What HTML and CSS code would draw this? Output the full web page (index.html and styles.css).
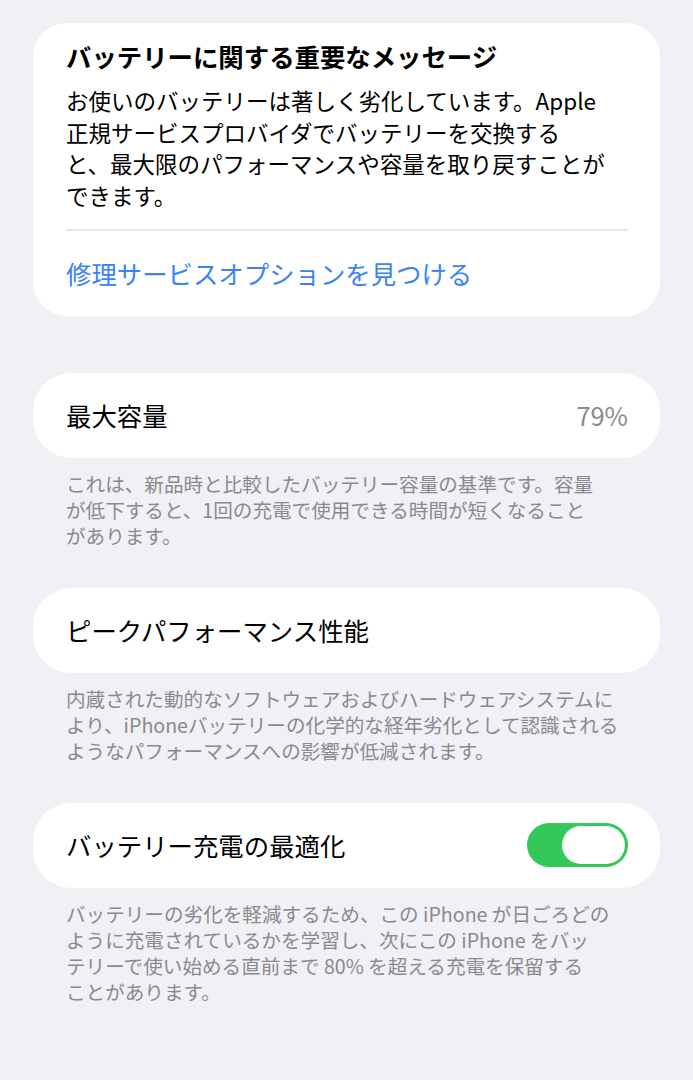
FILE: index.html
```html
<!DOCTYPE html>
<html lang="ja">
<head>
  <meta charset="UTF-8">
  <meta name="viewport" content="width=device-width, initial-scale=1.0">
  <title>バッテリーの状態と充電</title>
  <link rel="stylesheet" href="styles.css">
</head>
<body>
  <main class="page">
    <section class="card message">
      <h2 class="message-title">バッテリーに関する重要なメッセージ</h2>
      <p class="message-body">お使いのバッテリーは著しく劣化しています。Apple<br>正規サービスプロバイダでバッテリーを交換する<br>と、最大限のパフォーマンスや容量を取り戻すことが<br>できます。</p>
      <div class="divider"></div>
      <a class="message-link" href="#">修理サービスオプションを見つける</a>
    </section>

    <section class="card row first">
      <span class="row-label">最大容量</span>
      <span class="row-value">79%</span>
    </section>
    <p class="caption">これは、新品時と比較したバッテリー容量の基準です。容量<br>が低下すると、1回の充電で使用できる時間が短くなること<br>があります。</p>

    <section class="card row">
      <span class="row-label">ピークパフォーマンス性能</span>
    </section>
    <p class="caption">内蔵された動的なソフトウェアおよびハードウェアシステムに<br>より、iPhoneバッテリーの化学的な経年劣化として認識される<br>ようなパフォーマンスへの影響が低減されます。</p>

    <section class="card row">
      <span class="row-label">バッテリー充電の最適化</span>
      <span class="toggle on"><span class="knob"></span></span>
    </section>
    <p class="caption">バッテリーの劣化を軽減するため、この iPhone が日ごろどの<br>ように充電されているかを学習し、次にこの iPhone をバッ<br>テリーで使い始める直前まで 80% を超える充電を保留する<br>ことがあります。</p>
  </main>
</body>
</html>
```

FILE: styles.css
```css
body {
  margin: 0;
  background-color: #f0f0f5;
  font-family: "Noto Sans CJK JP", "Noto Sans", sans-serif;
  color: #000;
}
.page {
  padding: 23px 33px 40px;
}
.card {
  background-color: #fff;
  border-radius: 38px;
  padding: 0 32px 0 33px;
}
.message {
  padding-top: 16px;
  border-radius: 34px;
}
.message-title {
  margin: 0;
  font-size: 25.4px;
  font-weight: 700;
  line-height: 34px;
}
.message-body {
  margin: 12px 0 0;
  font-size: 22.5px;
  line-height: 31.7px;
  white-space: nowrap;
}
.divider {
  margin-top: 17px;
  height: 2px;
  background-color: #e6e6eb;
}
.message-link {
  display: flex;
  align-items: center;
  height: 85px;
  font-size: 25.4px;
  color: #3a82f6;
  text-decoration: none;
}
.row {
  display: flex;
  align-items: center;
  justify-content: space-between;
  height: 85px;
  margin-top: 38px;
}
.row.first {
  margin-top: 57px;
}
.row-label {
  font-size: 25.4px;
}
.row-value {
  font-size: 25.4px;
  color: #8a8a8e;
}
.caption {
  margin: 13px 0 0;
  padding: 0 0 0 33px;
  font-size: 19.6px;
  line-height: 26.3px;
  color: #8a8a8e;
  white-space: nowrap;
}
.toggle {
  display: flex;
  justify-content: flex-end;
  align-items: center;
  width: 101px;
  height: 44px;
  padding: 0 3px;
  box-sizing: border-box;
  border-radius: 22px;
  background-color: #e5e5ea;
}
.toggle.on {
  background-color: #34c759;
}
.knob {
  width: 63px;
  height: 38px;
  border-radius: 19px;
  background-color: #fff;
}
```
